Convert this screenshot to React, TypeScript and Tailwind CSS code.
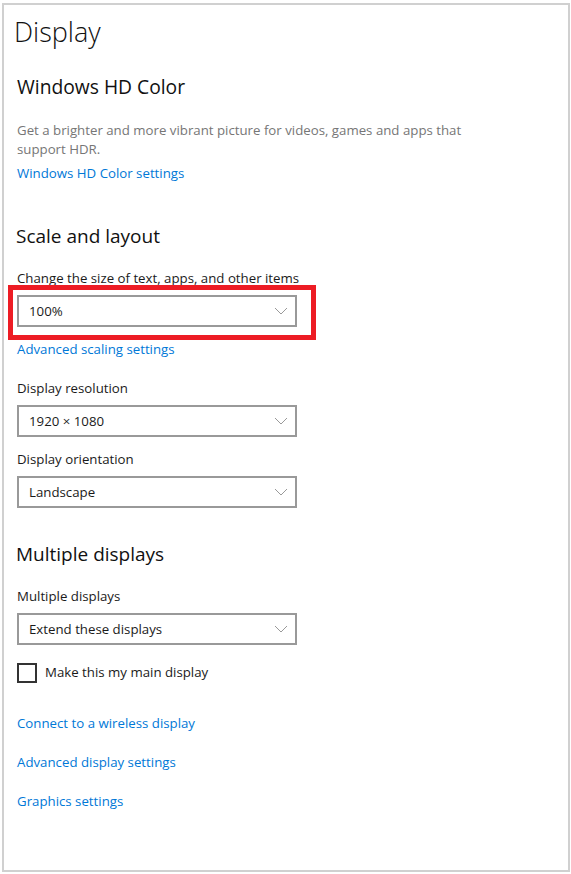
const font = { fontFamily: '"Open Sans", "Noto Sans", sans-serif' };

const Dropdown = ({ value }: { value: string }) => (
  <div className="flex h-8 w-[280px] items-center justify-between border-2 border-[#999999] bg-white pl-[10px] pr-[7px] text-[13.25px] text-[#1a1a1a]">
    <span className="pt-px">{value}</span>
    <svg width="14" height="8" viewBox="0 0 14 8" fill="none" stroke="#999999" strokeWidth="1">
      <path d="M1 1 7 7 13 1" />
    </svg>
  </div>
);

const Link = ({ children, className = "" }: { children: string; className?: string }) => (
  <a className={`block h-5 leading-5 text-[13.25px] text-[#0078d7] ${className}`}>{children}</a>
);

const Label = ({ children, className = "" }: { children: string; className?: string }) => (
  <p className={`h-5 leading-5 text-[13.25px] text-[#1a1a1a] ${className}`}>{children}</p>
);

const Heading = ({ children, className = "" }: { children: string; className?: string }) => (
  <h2 className={`h-7 leading-7 text-[#111111] ${className}`}>{children}</h2>
);

export default function App() {
  return (
    <div className="h-[874px] w-[571px] bg-white pb-[2px] pl-[2px] pr-[1px] pt-[3px]" style={font}>
      <div className="h-full border-2 border-[#d0d0d0] bg-white pl-[10px]">
        <h1 className="mt-[9px] h-9 text-[27px] font-light leading-9 text-[#111111]">Display</h1>

        <div className="pl-[3px]">
          <Heading className="mt-[23px] text-[19.25px]">Windows HD Color</Heading>
          <p className="mt-[20px] w-[470px] text-[13.25px] leading-[19px] text-[#767676]">
            Get a brighter and more vibrant picture for videos, games and apps that support HDR.
          </p>
          <Link className="mt-[4px]">Windows HD Color settings</Link>
        </div>

        <Heading className="mt-[39px] pl-[2px] text-[19px]">Scale and layout</Heading>

        <div className="pl-[3px]">
          <Label className="mt-[18px]">Change the size of text, apps, and other items</Label>
          <div className="relative mt-[7px] w-[280px]">
            <Dropdown value="100%" />
            <div className="absolute -bottom-[13px] -left-[9px] -right-[19px] -top-[10px] border-[5px] border-[#ed1c24]" />
          </div>
          <Link className="mt-[12px]">Advanced scaling settings</Link>

          <Label className="mt-[19px]">Display resolution</Label>
          <div className="mt-[7px]"><Dropdown value="1920 × 1080" /></div>
          <Label className="mt-[12px]">Display orientation</Label>
          <div className="mt-[7px]"><Dropdown value="Landscape" /></div>
        </div>

        <Heading className="mt-[32px] pl-[2px] text-[19px]">Multiple displays</Heading>

        <div className="pl-[3px]">
          <Label className="mt-[18px]">Multiple displays</Label>
          <div className="mt-[7px]"><Dropdown value="Extend these displays" /></div>
          <div className="mt-[18px] flex items-center gap-2">
            <span className="h-5 w-5 border-2 border-[#333333]" />
            <span className="-translate-y-px text-[13.25px] leading-5 text-[#1a1a1a]">Make this my main display</span>
          </div>
          <Link className="mt-[30px]">Connect to a wireless display</Link>
          <Link className="mt-[19px]">Advanced display settings</Link>
          <Link className="mt-[19px]">Graphics settings</Link>
        </div>
      </div>
    </div>
  );
}
